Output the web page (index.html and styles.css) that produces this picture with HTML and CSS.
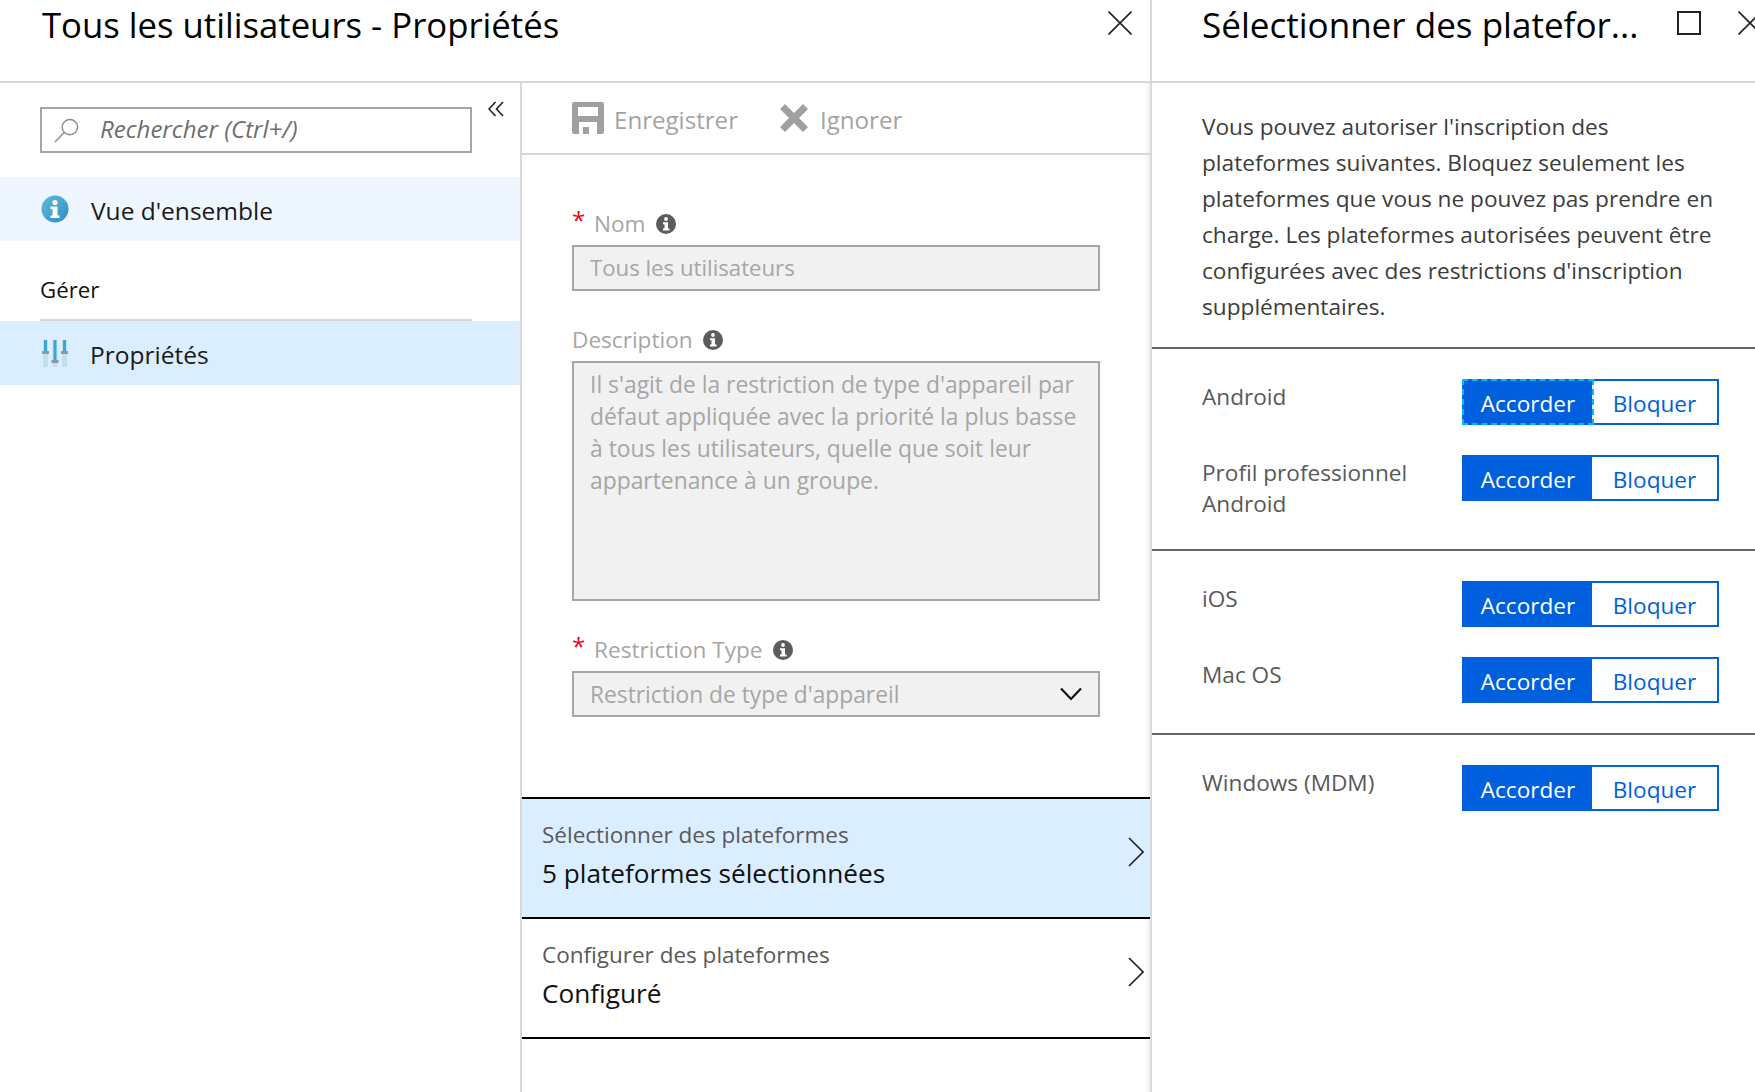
FILE: index.html
```html
<!DOCTYPE html>
<html lang="fr">
<head>
<meta charset="utf-8">
<title>Tous les utilisateurs - Propriétés</title>
<link rel="stylesheet" href="styles.css">
</head>
<body>
<div class="page">
  <section class="blade blade-main">
    <header class="blade-head head-main">
      <h1 class="blade-title">Tous les utilisateurs - Propriétés</h1>
      <svg class="head-x" viewBox="0 0 24 24"><path d="M0.5 0.5L23.5 23.5M23.5 0.5L0.5 23.5"/></svg>
    </header>
    <div class="blade-body">
      <nav class="nav">
        <div class="search-row">
          <div class="search">
            <svg class="search-icon" viewBox="0 0 26 26"><circle cx="16.5" cy="9.5" r="8"/><path d="M10.5 15L1 25"/></svg>
            <span class="search-text">Rechercher (Ctrl+/)</span>
          </div>
          <svg class="collapse" viewBox="0 0 16 16"><path d="M7.5 1L1 8L7.5 15M15 1L8.5 8L15 15"/></svg>
        </div>
        <a class="nav-item nav-over">
          <svg class="nav-icon" viewBox="0 0 28 28">
            <defs><linearGradient id="ig" x1="0" y1="0" x2="1" y2="1"><stop offset="0" stop-color="#62bbdf"/><stop offset="1" stop-color="#2f8fc0"/></linearGradient></defs>
            <circle cx="14" cy="14" r="13.5" fill="url(#ig)"/>
            <circle cx="14" cy="7.5" r="2.6" fill="#fff"/>
            <path d="M9.5 11.5H16.5V20.5H18.5V23H9.5V20.5H11.5V14H9.5Z" fill="#fff"/>
          </svg>
          <span>Vue d'ensemble</span>
        </a>
        <div class="nav-group">Gérer</div>
        <a class="nav-item nav-active">
          <svg class="nav-icon" viewBox="0 0 28 28">
            <rect x="2" y="1" width="5" height="27" fill="#bfe0ef"/>
            <rect x="11.5" y="1" width="5" height="27" fill="#bfe0ef"/>
            <rect x="21" y="1" width="5" height="27" fill="#bfe0ef"/>
            <rect x="3" y="1" width="3" height="11" fill="#3ea5d3"/>
            <rect x="12.5" y="1" width="3" height="20" fill="#3ea5d3"/>
            <rect x="22" y="1" width="3" height="11" fill="#3ea5d3"/>
            <rect x="1" y="12" width="7" height="3" fill="#8a9aa3"/>
            <rect x="10.5" y="21" width="7" height="3" fill="#8a9aa3"/>
            <rect x="20" y="12" width="7" height="3" fill="#8a9aa3"/>
          </svg>
          <span>Propriétés</span>
        </a>
      </nav>
      <main class="content">
        <div class="toolbar">
          <span class="tool tool-save">
            <svg class="tool-icon" viewBox="0 0 32 32"><path fill-rule="evenodd" d="M2 0H30A2 2 0 0 1 32 2V30A2 2 0 0 1 30 32H2A2 2 0 0 1 0 30V2A2 2 0 0 1 2 0ZM6 5V14H26V5ZM7 20V32H25V20ZM11 25H17V32H11Z"/></svg>
            <span>Enregistrer</span>
          </span>
          <span class="tool tool-ignore">
            <svg class="tool-icon tool-icon-x" viewBox="0 0 28 28"><path d="M5 0L14 9L23 0L28 5L19 14L28 23L23 28L14 19L5 28L0 23L9 14L0 5Z"/></svg>
            <span>Ignorer</span>
          </span>
        </div>
        <form class="form">
          <div class="field">
            <div class="label"><span class="star">*</span><span>Nom</span><svg class="hint" viewBox="0 0 20 20"><circle cx="10" cy="10" r="10"/><circle cx="10" cy="5" r="1.9" class="hint-i"/><path class="hint-i" d="M7 8.3H12V14.5H13.5V16.5H7V14.5H8.5V10.3H7Z"/></svg></div>
            <div class="input">Tous les utilisateurs</div>
          </div>
          <div class="field">
            <div class="label"><span>Description</span><svg class="hint" viewBox="0 0 20 20"><circle cx="10" cy="10" r="10"/><circle cx="10" cy="5" r="1.9" class="hint-i"/><path class="hint-i" d="M7 8.3H12V14.5H13.5V16.5H7V14.5H8.5V10.3H7Z"/></svg></div>
            <div class="input textarea">Il s'agit de la restriction de type d'appareil par défaut appliquée avec la priorité la plus basse à tous les utilisateurs, quelle que soit leur appartenance à un groupe.</div>
          </div>
          <div class="field">
            <div class="label"><span class="star">*</span><span>Restriction Type</span><svg class="hint" viewBox="0 0 20 20"><circle cx="10" cy="10" r="10"/><circle cx="10" cy="5" r="1.9" class="hint-i"/><path class="hint-i" d="M7 8.3H12V14.5H13.5V16.5H7V14.5H8.5V10.3H7Z"/></svg></div>
            <div class="input select"><span>Restriction de type d'appareil</span><svg class="select-chev" viewBox="0 0 22 14"><path d="M1 1.5L11 12L21 1.5"/></svg></div>
          </div>
        </form>
        <div class="link-rows">
          <a class="link-row link-selected">
            <div><div class="link-sub">Sélectionner des plateformes</div><div class="link-val">5 plateformes sélectionnées</div></div>
            <svg class="link-chev" viewBox="0 0 16 30"><path d="M1 1L15 15L1 29"/></svg>
          </a>
          <a class="link-row">
            <div><div class="link-sub">Configurer des plateformes</div><div class="link-val">Configuré</div></div>
            <svg class="link-chev" viewBox="0 0 16 30"><path d="M1 1L15 15L1 29"/></svg>
          </a>
        </div>
      </main>
    </div>
  </section>
  <section class="blade blade-side">
    <header class="blade-head head-side">
      <h2 class="blade-title">Sélectionner des platefor...</h2>
      <svg class="head-max" viewBox="0 0 24 24"><rect x="1" y="1" width="22" height="22"/></svg>
      <svg class="head-x head-x-side" viewBox="0 0 24 24"><path d="M0.5 0.5L23.5 23.5M23.5 0.5L0.5 23.5"/></svg>
    </header>
    <p class="intro">Vous pouvez autoriser l'inscription des plateformes suivantes. Bloquez seulement les plateformes que vous ne pouvez pas prendre en charge. Les plateformes autorisées peuvent être configurées avec des restrictions d'inscription supplémentaires.</p>
    <div class="group">
      <div class="platform"><div class="platform-name">Android</div><div class="toggle"><span class="t-on t-focus">Accorder</span><span class="t-off">Bloquer</span></div></div>
      <div class="platform"><div class="platform-name">Profil professionnel Android</div><div class="toggle"><span class="t-on">Accorder</span><span class="t-off">Bloquer</span></div></div>
    </div>
    <div class="group">
      <div class="platform"><div class="platform-name">iOS</div><div class="toggle"><span class="t-on">Accorder</span><span class="t-off">Bloquer</span></div></div>
      <div class="platform"><div class="platform-name">Mac OS</div><div class="toggle"><span class="t-on">Accorder</span><span class="t-off">Bloquer</span></div></div>
    </div>
    <div class="group group-last">
      <div class="platform"><div class="platform-name">Windows (MDM)</div><div class="toggle"><span class="t-on">Accorder</span><span class="t-off">Bloquer</span></div></div>
    </div>
  </section>
</div>
</body>
</html>
```

FILE: styles.css
```css
* { box-sizing: border-box; }
html, body { margin: 0; height: 100%; background: #fff; overflow: hidden; }
body { font-family: "Open Sans", "Noto Sans", sans-serif; color: #111; }
a { display: block; }
.page { display: flex; width: 1755px; height: 1092px; overflow: hidden; }

.blade { height: 1092px; display: flex; flex-direction: column; }
.blade-main { width: 1152px; flex: none; border-right: 2px solid #d8d8d8; }
.blade-side { width: 603px; flex: none; }

.blade-head { height: 83px; flex: none; border-bottom: 2px solid #d6d6d6; display: flex; align-items: flex-start; }
.head-main { padding: 0 18px 0 42px; justify-content: space-between; }
.head-side { padding-left: 50px; width: 610px; }
.blade-title { margin: 0; font-size: 34.7px; font-weight: 400; line-height: 50px; color: #000; white-space: nowrap; }
.head-x { width: 24px; height: 24px; margin-top: 11px; flex: none; }
.head-x path { fill: none; stroke: #222; stroke-width: 1.6; }
.head-side .blade-title { width: 478px; font-size: 35.05px; }
.head-max { width: 24px; height: 24px; margin-top: 11px; flex: none; }
.head-max rect { fill: none; stroke: #222; stroke-width: 2; }
.head-x-side { margin-left: 37px; }

.blade-body { flex: 1; display: flex; min-height: 0; }

.nav { width: 522px; flex: none; border-right: 2px solid #d8d8d8; padding-top: 24px; }
.search-row { display: flex; align-items: flex-start; margin-left: 40px; }
.search { width: 432px; height: 46px; border: 2px solid #a6a6a6; display: flex; align-items: center; padding-left: 12px; }
.search-icon { width: 25px; height: 25px; flex: none; }
.search-icon circle, .search-icon path { fill: none; stroke: #8c8c8c; stroke-width: 1.5; }
.search-text { margin-left: 21px; font-size: 24px; line-height: 40px; margin-top: -2px; font-style: italic; color: #6e6e6e; }
.collapse { width: 16px; height: 16px; margin: -6px 0 0 16px; flex: none; }
.collapse path { fill: none; stroke: #222; stroke-width: 1.6; }

.nav-item { height: 64px; display: flex; align-items: center; padding-left: 41px; font-size: 24.5px; color: #1a1a1a; }
.nav-item span { padding-top: 2px; }
.nav-over { margin-top: 24px; background: #eef6ff; }
.nav-active { background: #dbeeff; }
.nav-icon { width: 28px; height: 28px; flex: none; margin-right: 22px; }
.nav-active .nav-icon { margin-right: 21px; }
.nav-group { margin: 0 48px 0 40px; height: 80px; border-bottom: 2px solid #d6d6d6; padding-top: 31px; font-size: 22.3px; font-weight: 500; line-height: 36px; color: #111; }

.content { width: 628px; flex: none; background: linear-gradient(to left, #f0f0f0, #fff 6px); }
.toolbar { height: 72px; border-bottom: 2px solid #d6d6d6; display: flex; align-items: center; padding-left: 50px; }
.tool { display: flex; align-items: center; font-size: 24.1px; color: #a3a3a3; }
.tool > span { padding-top: 2px; }
.tool-icon { width: 32px; height: 32px; fill: #a0a0a0; margin-right: 10px; flex: none; }
.tool-icon-x { width: 28px; height: 28px; margin-right: 12px; }
.tool-ignore { margin-left: 42px; }

.form { padding: 20px 50px 0; }
.field { margin-top: 32px; }
.label { height: 32px; margin-bottom: 6px; display: flex; align-items: center; font-size: 22.6px; color: #a6a6a6; }
.star { color: #ee0022; width: 22px; flex: none; font-size: 24px; line-height: 20px; align-self: flex-start; margin-top: 3px; }
.hint { width: 20px; height: 20px; margin-left: 10px; flex: none; margin-top: 2px; }
.hint circle { fill: #5c5c5c; }
.hint .hint-i { fill: #fff; }
.input { width: 528px; height: 46px; border: 2px solid #a6a6a6; background: #f1f1f1; padding: 0 16px; font-size: 22.2px; line-height: 42px; color: #a6a6a6; }
.textarea { height: 240px; font-size: 22.85px; line-height: 32px; padding-top: 6px; }
.select { display: flex; align-items: center; justify-content: space-between; padding-right: 16px; font-size: 22.75px; }
.select-chev { width: 22px; height: 14px; flex: none; }
.select-chev path { fill: none; stroke: #111; stroke-width: 2.2; }
.select span { padding-top: 1px; }

.link-rows { margin-top: 80px; border-bottom: 2px solid #000; }
.link-row { height: 120px; border-top: 2px solid #000; display: flex; align-items: center; justify-content: space-between; padding: 0 6px 0 20px; }
.link-row > div { margin-bottom: 4px; }
.link-selected { background: #dbeeff; }
.link-sub { font-size: 22.5px; line-height: 34px; padding-top: 1px; color: #595959; }
.link-val { font-size: 26.2px; line-height: 43px; color: #111; }
.link-chev { width: 16px; height: 30px; flex: none; margin-bottom: 12px; }
.link-chev path { fill: none; stroke: #222; stroke-width: 1.6; }

.intro { margin: 26px 0 22px; padding: 0 20px 0 50px; font-size: 22.65px; line-height: 36px; color: #3c3c3c; }
.group { border-top: 2px solid #666; padding: 30px 36px 30px 50px; display: flex; flex-direction: column; gap: 30px; }
.group-last { flex: 1; }
.platform { display: grid; grid-template-columns: 260px 257px; }
.platform-name { font-size: 22.6px; line-height: 31px; padding: 2px 20px 0 0; color: #595959; }
.toggle { display: flex; height: 46px; border: 2px solid #005fdc; font-size: 22.6px; }
.toggle span { display: flex; align-items: center; justify-content: center; padding-top: 2px; }
.t-on { width: 128px; background: #005fdc; color: #fff; flex: none; }
.t-off { flex: 1; color: #005fdc; }
.t-focus { outline: 2px dashed #00bcf2; outline-offset: 0; }
```
